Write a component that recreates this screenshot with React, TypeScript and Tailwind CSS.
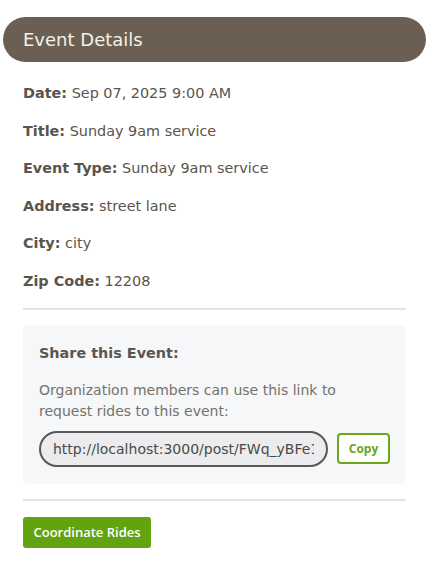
const details: { label: string; value: string }[] = [
  { label: "Date:", value: "Sep 07, 2025 9:00 AM" },
  { label: "Title:", value: "Sunday 9am service" },
  { label: "Event Type:", value: "Sunday 9am service" },
  { label: "Address:", value: "street lane" },
  { label: "City:", value: "city" },
  { label: "Zip Code:", value: "12208" },
];

export default function App() {
  return (
    <div className="min-h-[581px] w-[434px] bg-white font-['DejaVu_Sans',sans-serif] text-[#5b544c]">
      <div className="pl-[3px] pr-[8px] pt-[17px]">
        <div className="flex h-[45px] items-center rounded-full bg-[#6b5f53] px-5 text-[18px] text-[#f5f1ea]">
          Event Details
        </div>
      </div>

      <div className="pl-[23px] pr-[28px]">
        <div className="flex flex-col gap-[19.6px] pt-[22px] text-[14.4px] leading-[18px]">
          {details.map((row) => (
            <p key={row.label}>
              <span className="font-bold">{row.label}</span> {row.value}
            </p>
          ))}
        </div>

        <div className="mt-[18px] h-[2px] bg-[#e4e4e4]" />

        <div className="mt-[15px] rounded-md bg-[#f6f7f8] px-4 pb-[17px] pt-[20px]">
          <h3 className="text-[14.4px] font-bold leading-[17px] text-[#5a5651]">Share this Event:</h3>
          <p className="mt-[18px] text-[14px] leading-[21px] text-[#75726e]">
            Organization members can use this link to request rides to this event:
          </p>
          <div className="mt-[9px] flex items-center gap-[9px]">
            <input
              readOnly
              value="http://localhost:3000/post/FWq_yBFe1Cx9"
              className="h-[36px] w-[289px] rounded-full border-2 border-[#58585a] bg-[#ececee] px-3 font-['DejaVu_Sans',sans-serif] text-[14px] text-[#4a4a4a] outline-none"
            />
            <button
              type="button"
              className="h-[31px] w-[53px] rounded-[4px] border-2 border-[#6aa51d] bg-white font-['Open_Sans',sans-serif] text-[12px] font-bold text-[#6aa51d]"
            >
              Copy
            </button>
          </div>
        </div>

        <div className="mt-[15px] h-[2px] bg-[#e4e4e4]" />

        <button
          type="button"
          className="mt-[16px] h-[31px] w-[128px] rounded-[3px] bg-[#63a30f] font-['Open_Sans',sans-serif] text-[13px] font-semibold text-white"
        >
          Coordinate Rides
        </button>
      </div>
    </div>
  );
}
